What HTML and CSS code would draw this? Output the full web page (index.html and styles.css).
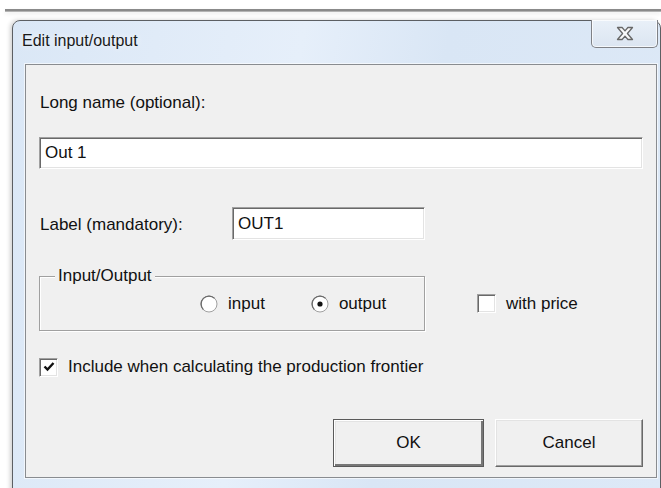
FILE: index.html
```html
<!DOCTYPE html>
<html lang="en">
<head>
<meta charset="utf-8">
<title>Edit input/output</title>
<link rel="stylesheet" href="styles.css">
</head>
<body>
<div class="desk">
  <div class="parent-edge"></div>
  <div class="window">
    <div class="titlebar">
      <span class="title">Edit input/output</span>
      <button class="close" type="button" aria-label="Close">
        <svg width="18" height="15" viewBox="0 0 18 15">
          <path d="M1.5 1.5h4.6l2.9 3.4 2.9-3.4h4.6l-5.1 6 5.1 6h-4.6l-2.9-3.4-2.9 3.4h-4.6l5.1-6z" fill="#fafafa" stroke="#686868" stroke-width="1.3" stroke-linejoin="round"/>
        </svg>
      </button>
    </div>
    <div class="client">
      <div class="label-line">Long name (optional):</div>
      <div class="textbox wide">Out 1</div>

      <div class="label-row">
        <span class="label-text">Label (mandatory):</span>
        <div class="textbox short">OUT1</div>
      </div>

      <div class="io-row">
        <fieldset class="group">
          <legend>Input/Output</legend>
          <label class="radio">
            <svg class="radio-mark" width="18" height="18" viewBox="0 0 18 18">
              <circle cx="9" cy="9" r="8" fill="#fff" stroke="#a0a0a0"/>
              <path d="M3.4 14.6A7 7 0 0 1 14.6 3.4" fill="none" stroke="#6a6a6a" stroke-width="1.3"/>
            </svg>
            <span>input</span>
          </label>
          <label class="radio">
            <svg class="radio-mark" width="18" height="18" viewBox="0 0 18 18">
              <circle cx="9" cy="9" r="8" fill="#fff" stroke="#a0a0a0"/>
              <path d="M3.4 14.6A7 7 0 0 1 14.6 3.4" fill="none" stroke="#6a6a6a" stroke-width="1.3"/>
              <circle cx="9" cy="9" r="2.6" fill="#111"/>
            </svg>
            <span>output</span>
          </label>
        </fieldset>
        <label class="check price">
          <span class="box"></span>
          <span>with price</span>
        </label>
      </div>

      <label class="check include">
        <span class="box">
          <svg width="14" height="14" viewBox="0 0 14 14">
            <path d="M2.5 6.5l3 3 6-6.5" fill="none" stroke="#111" stroke-width="2.4"/>
          </svg>
        </span>
        <span>Include when calculating the production frontier</span>
      </label>

      <div class="buttons">
        <button class="btn default" type="button">OK</button>
        <button class="btn" type="button">Cancel</button>
      </div>
    </div>
  </div>
</div>
</body>
</html>
```

FILE: styles.css
```css
html, body {
  margin: 0;
  padding: 0;
  background: #fff;
  overflow: hidden;
}

.desk {
  width: 661px;
  height: 488px;
  position: relative;
  overflow: hidden;
  font-family: "Liberation Sans", Arial, sans-serif;
  font-size: 17px;
  color: #111;
}

/* edge of the owner window peeking above the dialog */
.parent-edge {
  margin: 9px 0 0 5px;
  height: 2px;
  background: #8a8a8a;
  border-bottom: 1px solid #b4b4b4;
  box-shadow: 0 2px 4px rgba(0, 0, 0, 0.08);
}

.window {
  margin: 8px 0 0 12px;
  width: 647px;
  height: 480px;
  border: 1px solid #5c5f63;
  border-radius: 8px 8px 0 0;
  background: linear-gradient(100deg, #dae7f6 0%, #e6effa 40%, #d9e6f5 60%, #dde9f7 100%);
  box-shadow: -2px 0 4px rgba(0, 0, 0, 0.18);
}

.titlebar {
  height: 43px;
  display: flex;
  align-items: flex-start;
}

.title {
  margin: 11px 0 0 9px;
  font-size: 16px;
  color: #1a1a1a;
  text-shadow: 0 0 6px #fff;
}

.close {
  margin-left: auto;
  margin-right: 2px;
  width: 67px;
  height: 28px;
  margin-top: -1px;
  padding: 0;
  border: 1px solid #7f8186;
  border-top: none;
  border-radius: 0 0 5px 5px;
  background: linear-gradient(#e9f0f8, #dbe5f1);
  box-shadow: inset 0 0 0 1px rgba(255, 255, 255, 0.7);
  display: flex;
  align-items: center;
  justify-content: center;
}

.client {
  margin-left: 12px;
  width: 632px;
  height: 414px;
  box-sizing: border-box;
  border: 1px solid #898c90;
  background: #f0f0f0;
  padding: 0 13px;
  box-shadow: 0 0 0 1px rgba(255, 255, 255, 0.6);
}

.label-line {
  margin-top: 28px;
  padding-left: 1px;
  line-height: 20px;
  height: 20px;
}

.textbox {
  box-sizing: border-box;
  background: #fff;
  border-style: solid;
  border-width: 1px;
  border-color: #a0a0a0 #fff #fff #a0a0a0;
  box-shadow: inset 1px 1px 0 #696969, inset -1px -1px 0 #e3e3e3;
  padding-left: 5px;
  display: flex;
  align-items: center;
}

.textbox.wide {
  margin-top: 24px;
  width: 604px;
  height: 32px;
}

.label-row {
  margin-top: 38px;
  display: flex;
  align-items: center;
}

.label-text {
  width: 192px;
  padding-left: 1px;
  padding-top: 3px;
}

.textbox.short {
  width: 193px;
  height: 33px;
}

.io-row {
  margin-top: 36px;
  display: flex;
  align-items: center;
}

.group {
  margin: 0;
  width: 386px;
  height: 55px;
  box-sizing: border-box;
  border: 1px solid #a0a0a0;
  box-shadow: 1px 1px 0 #fff, inset 1px 1px 0 #fff;
  padding: 0 0 0 160px;
  display: flex;
  align-items: center;
  position: relative;
}

.group legend {
  position: absolute;
  top: -11px;
  left: 15px;
  padding: 0 3px;
  background: #f0f0f0;
  line-height: 20px;
}

.radio {
  display: flex;
  align-items: center;
  line-height: 20px;
}

.radio-mark {
  margin-right: 10px;
  display: block;
}

.radio + .radio {
  margin-left: 46px;
}

.check {
  display: flex;
  align-items: center;
  line-height: 20px;
}

.box {
  width: 19px;
  height: 19px;
  box-sizing: border-box;
  background: #fff;
  border-style: solid;
  border-width: 1px;
  border-color: #a0a0a0 #fff #fff #a0a0a0;
  box-shadow: inset 1px 1px 0 #696969, inset -1px -1px 0 #e3e3e3;
  margin-right: 10px;
  display: flex;
  align-items: center;
  justify-content: center;
}

.price {
  margin-left: 52px;
}

.include {
  margin-top: 26px;
}

.buttons {
  margin-top: 42px;
  display: flex;
  justify-content: flex-end;
  gap: 11px;
}

.btn {
  width: 148px;
  height: 48px;
  box-sizing: border-box;
  font-family: "Liberation Sans", Arial, sans-serif;
  font-size: 17px;
  color: #111;
  background: #f0f0f0;
  border-style: solid;
  border-width: 1px;
  border-color: #fff #696969 #696969 #fff;
  box-shadow: inset -1px -1px 0 #a0a0a0, inset 1px 1px 0 #e3e3e3;
  padding: 0;
}

.btn.default {
  width: 151px;
  border: 1px solid #5a5a5a;
  box-shadow: inset 1px 1px 0 #fff, inset -2px -2px 0 #777, inset 2px 2px 0 #e3e3e3;
}
```
